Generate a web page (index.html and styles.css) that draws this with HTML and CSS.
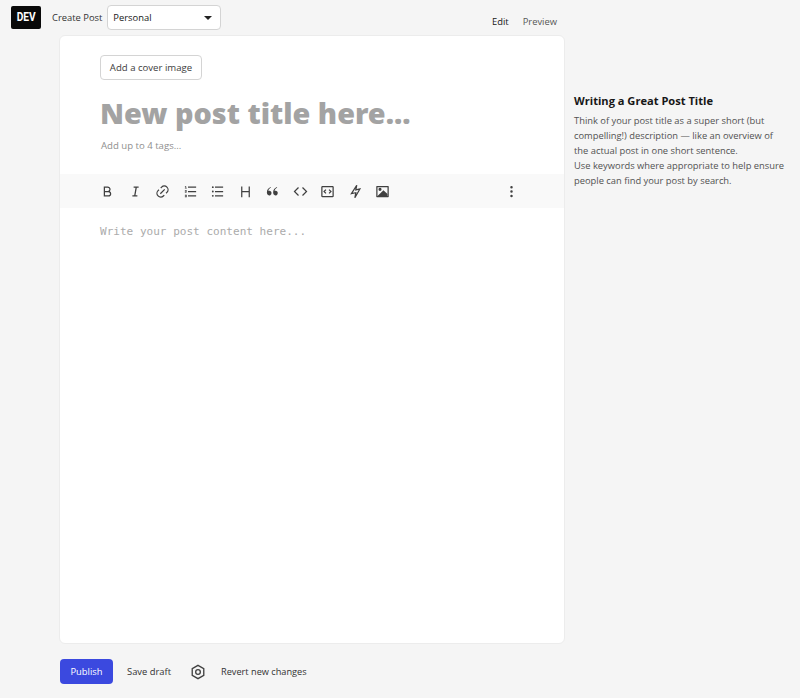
FILE: index.html
```html
<!DOCTYPE html>
<html lang="en">
<head>
    <meta charset="UTF-8">
    <meta name="viewport" content="width=device-width, initial-scale=1.0">
    <title>New Post - DEV</title>
    <link rel="stylesheet" href="styles.css">
</head>
<body>
    <header class="top-bar">
        <div class="logo"><span class="logo-text">DEV</span></div>
        <span class="create-label">Create Post</span>
        <div class="org-select">
            <span>Personal</span>
            <span class="select-arrow"></span>
        </div>
        <nav class="mode-tabs">
            <span class="mode-tab active">Edit</span>
            <span class="mode-tab">Preview</span>
        </nav>
    </header>

    <div class="main-row">
        <main class="editor-card">
            <div class="editor-head">
                <button class="cover-button">Add a cover image</button>
                <div class="post-title">New post title here...</div>
                <div class="post-tags">Add up to 4 tags...</div>
            </div>
            <div class="toolbar">
                <svg class="tool" viewBox="0 0 24 24"><path d="M8 11h4.5a2.5 2.5 0 0 0 0-5H8v5Zm10 4.5a4.5 4.5 0 0 1-4.5 4.5H6V4h6.500a4.500 4.500 0 0 1 3.250 7.600A4.500 4.500 0 0 1 18 15.500ZM8 13v5h5.500a2.500 2.500 0 0 0 0-5H8Z"/></svg>
                <svg class="tool" viewBox="0 0 24 24"><path d="M15 20H7v-2h2.900l2.100-12H9V4h8v2h-2.900l-2.100 12H15v2Z"/></svg>
                <svg class="tool" viewBox="0 0 24 24"><path d="M18.400 15.500l-1.400-1.400 1.400-1.400a5 5 0 1 0-7.100-7.100L9.900 7 8.500 5.600 9.900 4.200a7 7 0 0 1 9.900 9.900l-1.400 1.400Zm-2.900 2.900l-1.400 1.400a7 7 0 0 1-9.900-9.900l1.400-1.400L7 9.900l-1.400 1.400a5 5 0 1 0 7.100 7.100l1.400-1.400 1.400 1.400Zm-.7-10.600l1.400 1.400-7 7-1.400-1.400 7-7Z"/></svg>
                <svg class="tool" viewBox="0 0 24 24"><path d="M8 4h13v2H8V4ZM5 3v3h1v1H3V6h1V4H3V3h2ZM3 14v-2.500h2V11H3v-1h3v2.500H4v.5h2v1H3Zm2 5.500H3v-1h2V18H3v-1h3v4H3v-1h2v-.5ZM8 11h13v2H8v-2Zm0 7h13v2H8v-2Z"/></svg>
                <svg class="tool" viewBox="0 0 24 24"><path d="M8 4h13v2H8V4ZM4.500 6.500a1.500 1.500 0 1 1 0-3 1.500 1.500 0 0 1 0 3Zm0 7a1.500 1.500 0 1 1 0-3 1.500 1.500 0 0 1 0 3Zm0 6.900a1.500 1.500 0 1 1 0-3 1.500 1.500 0 0 1 0 3ZM8 11h13v2H8v-2Zm0 7h13v2H8v-2Z"/></svg>
                <svg class="tool" viewBox="0 0 24 24"><path d="M17 11V4h2v17h-2v-8H7v8H5V4h2v7h10Z"/></svg>
                <svg class="tool" viewBox="0 0 24 24"><path d="M4.600 17.300C3.600 16.200 3 15 3 13c0-3.500 2.500-6.600 6-8.200l.5.800C6.200 7.400 5.500 9.700 5.300 11.200c.5-.3 1.200-.4 1.900-.3 1.800.2 3.200 1.600 3.200 3.500a3.500 3.500 0 0 1-5.800 2.900Zm10 0C13.600 16.200 13 15 13 13c0-3.500 2.500-6.600 6-8.200l.5.800c-3.300 1.800-4 4.100-4.200 5.600.5-.3 1.200-.4 1.900-.3 1.800.2 3.200 1.600 3.200 3.500a3.500 3.500 0 0 1-5.800 2.900Z"/></svg>
                <svg class="tool" viewBox="0 0 24 24"><path d="M23 12l-7.100 7.100-1.400-1.400 5.700-5.700-5.700-5.700 1.400-1.400L23 12ZM3.800 12l5.700 5.700-1.400 1.400L1 12l7.100-7.100 1.400 1.400L3.800 12Z"/></svg>
                <svg class="tool tool-line" viewBox="0 0 24 24"><rect x="3" y="4" width="18" height="16" rx="1"/><path d="M9.500 9l-3 3 3 3M14.500 9l3 3-3 3"/></svg>
                <svg class="tool tool-line" viewBox="0 0 24 24"><path d="M14 2l-1.500 7.500L19 8l-8 14 1.500-8L5.500 15.500 14 2Z"/></svg>
                <svg class="tool" viewBox="0 0 24 24"><path d="M3 3h18a1 1 0 0 1 1 1v16a1 1 0 0 1-1 1H3a1 1 0 0 1-1-1V4a1 1 0 0 1 1-1Zm1 2v14h16V5H4Zm4 6a2.500 2.500 0 1 1 0-5 2.500 2.500 0 0 1 0 5Z"/><path d="M4 19l9.500-9 6.500 6v3H4Z"/></svg>
                <svg class="tool tool-more" viewBox="0 0 24 24"><path d="M12 3a2 2 0 1 0 0 4 2 2 0 0 0 0-4Zm0 7a2 2 0 1 0 0 4 2 2 0 0 0 0-4Zm0 7a2 2 0 1 0 0 4 2 2 0 0 0 0-4Z"/></svg>
            </div>
            <div class="post-body">Write your post content here...</div>
        </main>

        <aside class="help-panel">
            <h4>Writing a Great Post Title</h4>
            <p>Think of your post title as a super short (but compelling!) description — like an overview of the actual post in one short sentence.<br>Use keywords where appropriate to help ensure people can find your post by search.</p>
        </aside>
    </div>

    <footer class="action-bar">
        <button class="publish-button">Publish</button>
        <span class="save-draft">Save draft</span>
        <svg class="settings-icon" viewBox="0 0 24 24"><path d="M12 2l8.660 5v10L12 22l-8.660-5V7L12 2Z"/><circle cx="12" cy="12" r="3.500"/></svg>
        <span class="revert-link">Revert new changes</span>
    </footer>
</body>
</html>
```

FILE: styles.css
```css
* {
    box-sizing: border-box;
}
body {
    margin: 0;
    height: 698px;
    overflow: hidden;
    background-color: #f5f5f5;
    color: #171717;
    font-family: "Open Sans", "Noto Sans", sans-serif;
    font-size: 9.400px;
}
.top-bar {
    display: flex;
    align-items: center;
    height: 35px;
    padding-left: 11px;
    width: 565px;
}
.logo {
    width: 30px;
    height: 23px;
    background-color: #090909;
    border-radius: 2px;
    color: #fff;
    font-family: "Roboto", sans-serif;
    font-weight: 700;
    font-size: 12px;
    line-height: 23px;
    text-align: center;
}
.logo-text {
    display: inline-block;
    transform: scaleX(0.85);
}
.create-label {
    margin-left: 11px;
    color: #333;
}
.org-select {
    display: flex;
    justify-content: space-between;
    align-items: center;
    width: 114px;
    height: 25px;
    margin-left: 5px;
    padding: 0 8px 0 5px;
    background-color: #fff;
    border: 1px solid #d4d4d4;
    border-radius: 4px;
}
.select-arrow {
    width: 0;
    height: 0;
    border-left: 4.500px solid transparent;
    border-right: 4.500px solid transparent;
    border-top: 4.500px solid #222;
}
.mode-tabs {
    display: flex;
    gap: 14px;
    margin-left: auto;
    margin-right: 8px;
    margin-top: 7px;
}
.mode-tab {
    color: #575757;
}
.mode-tab.active {
    color: #171717;
}
.main-row {
    display: flex;
    align-items: flex-start;
}
.editor-card {
    width: 506px;
    height: 609px;
    margin-left: 59px;
    background-color: #fff;
    border: 1px solid #ececec;
    border-radius: 6px;
    overflow: hidden;
}
.editor-head {
    height: 138px;
    padding: 19px 40px 0;
}
.cover-button {
    display: block;
    width: 102px;
    height: 25px;
    padding: 0;
    background-color: #fff;
    border: 1px solid #d4d4d4;
    border-radius: 4px;
    color: #3d3d3d;
    font-family: inherit;
    font-size: 9.600px;
}
.post-title {
    margin-top: 13px;
    color: #a3a3a3;
    font-family: "Noto Sans", sans-serif;
    font-weight: 900;
    font-size: 28.800px;
    line-height: 40px;
}
.post-tags {
    margin-top: 6px;
    margin-left: 1px;
    color: #8f8f8f;
    font-size: 9.600px;
    line-height: 14px;
}
.toolbar {
    display: flex;
    align-items: center;
    height: 34px;
    padding-left: 40px;
    background-color: #f9f9f9;
}
.tool {
    width: 15px;
    height: 15px;
    margin-right: 12.500px;
    fill: #404040;
}
.tool-line {
    fill: none;
    stroke: #404040;
    stroke-width: 2;
}
.tool-more {
    margin-left: auto;
    margin-right: 45px;
}
.post-body {
    padding: 16px 40px;
    color: #ababab;
    font-family: "DejaVu Sans Mono", "Liberation Mono", monospace;
    font-size: 11.050px;
    line-height: 16px;
}
.help-panel {
    width: 212px;
    margin-left: 9px;
    margin-top: 58px;
}
.help-panel h4 {
    margin: 0 0 4px;
    color: #171717;
    font-size: 11.100px;
    font-weight: 700;
    line-height: 16px;
}
.help-panel p {
    margin: 0;
    color: #525252;
    font-size: 9.350px;
    line-height: 15px;
}
.action-bar {
    display: flex;
    align-items: center;
    height: 25px;
    margin-top: 15px;
    margin-left: 60px;
}
.publish-button {
    width: 53px;
    height: 25px;
    padding: 0;
    background-color: #3b49df;
    border: none;
    border-radius: 4px;
    color: #fff;
    font-family: inherit;
    font-size: 9.400px;
}
.save-draft {
    margin-left: 14px;
    color: #333;
}
.settings-icon {
    width: 16px;
    height: 16px;
    margin-left: 19px;
    fill: none;
    stroke: #404040;
    stroke-width: 2;
}
.revert-link {
    margin-left: 15px;
    color: #333;
    font-size: 9.200px;
}
```
